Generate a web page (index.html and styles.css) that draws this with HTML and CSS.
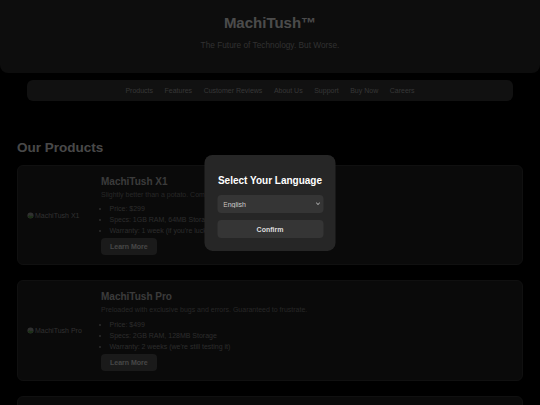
FILE: index.html
```html
<!DOCTYPE html>
<html lang="en">
<head>
  <meta charset="UTF-8">
  <title>MachiTush™</title>
  <link rel="stylesheet" href="styles.css">
</head>
<body>

  <header>
    <h1>MachiTush™</h1>
    <p>The Future of Technology. But Worse.</p>
  </header>

  <nav>
    <a href="#products">Products</a>
    <a href="#features">Features</a>
    <a href="#reviews">Customer Reviews</a>
    <a href="#about">About Us</a>
    <a href="#support">Support</a>
    <a href="#buy">Buy Now</a>
    <a href="#careers">Careers</a>
  </nav>

  <!-- PRODUCTS -->
  <section id="products">
    <h2>Our Products</h2>

    <div class="product">
      <div class="product-img">
        <svg class="broken" viewBox="0 0 16 16"><circle cx="8" cy="8" r="7" fill="#8a8a8a"/><path d="M2 11 L6 7 L9 10 L11 8 L14 11 A7 7 0 0 1 2 11 Z" fill="#4c8a3c"/></svg>MachiTush X1
      </div>
      <div class="product-info">
        <h3>MachiTush X1</h3>
        <p>Slightly better than a potato. Comes with a charger that might work.</p>
        <ul>
          <li>Price: $299</li>
          <li>Specs: 1GB RAM, 64MB Storage</li>
          <li>Warranty: 1 week (if you're lucky)</li>
        </ul>
        <button class="learn-btn">Learn More</button>
      </div>
    </div>

    <div class="product">
      <div class="product-img">
        <svg class="broken" viewBox="0 0 16 16"><circle cx="8" cy="8" r="7" fill="#8a8a8a"/><path d="M2 11 L6 7 L9 10 L11 8 L14 11 A7 7 0 0 1 2 11 Z" fill="#4c8a3c"/></svg>MachiTush Pro
      </div>
      <div class="product-info">
        <h3>MachiTush Pro</h3>
        <p>Preloaded with exclusive bugs and errors. Guaranteed to frustrate.</p>
        <ul>
          <li>Price: $499</li>
          <li>Specs: 2GB RAM, 128MB Storage</li>
          <li>Warranty: 2 weeks (we're still testing it)</li>
        </ul>
        <button class="learn-btn">Learn More</button>
      </div>
    </div>

    <div class="product">
      <div class="product-img">
        <svg class="broken" viewBox="0 0 16 16"><circle cx="8" cy="8" r="7" fill="#8a8a8a"/><path d="M2 11 L6 7 L9 10 L11 8 L14 11 A7 7 0 0 1 2 11 Z" fill="#4c8a3c"/></svg>MachiTush Ultra
      </div>
      <div class="product-info">
        <h3>MachiTush Ultra</h3>
        <p>Our most expensive mistake yet. Now with twice the lag.</p>
        <ul>
          <li>Price: $999</li>
          <li>Specs: 4GB RAM, 256MB Storage</li>
          <li>Warranty: None (good luck)</li>
        </ul>
        <button class="learn-btn">Learn More</button>
      </div>
    </div>
  </section>

  <!-- LANGUAGE POPUP -->
  <div class="overlay"></div>
  <div class="lang-modal">
    <h2>Select Your Language</h2>
    <div class="select-wrap">
      <select id="langSelect">
        <option>English</option>
        <option>Español</option>
        <option>Français</option>
        <option>Deutsch</option>
      </select>
      <svg class="chevron" viewBox="0 0 10 6"><path d="M1.5 1.2 L5 4.6 L8.5 1.2" fill="none" stroke="#ddd" stroke-width="1.8"/></svg>
    </div>
    <button class="confirm-btn" onclick="closeModal()">Confirm</button>
  </div>

  <script>
    function closeModal() {
      document.querySelector(".overlay").style.display = "none";
      document.querySelector(".lang-modal").style.display = "none";
    }
  </script>

</body>
</html>
```

FILE: styles.css
```css
body {
  font-family: "Liberation Sans", Arial, sans-serif;
  margin: 0;
  background-color: #000;
}

header {
  background-color: #252525;
  text-align: center;
  padding: 14px 10px 23px;
  border-radius: 0 0 8px 8px;
}

header h1 {
  margin: 0 0 8px;
  font-size: 15px;
  line-height: 18px;
  color: #d8d8d8;
}

header p {
  margin: 0;
  font-size: 8.3px;
  line-height: 10px;
  color: #8a8a8a;
}

nav {
  width: 90%;
  margin: 7px auto 0;
  padding: 6.5px 0;
  background-color: #313131;
  border-radius: 6px;
  display: flex;
  justify-content: center;
  gap: 11.5px;
}

nav a {
  color: #9a9a9a;
  text-decoration: none;
  font-size: 7px;
  line-height: 8px;
}

section {
  padding: 38.5px 17px 0;
}

section h2 {
  margin: 0 0 10px;
  font-size: 13.5px;
  color: #cfcfcf;
}

.product {
  display: flex;
  align-items: center;
  gap: 14px;
  padding: 10px 9px 9px;
  margin-bottom: 15px;
  background-color: #1d1d1d;
  border: 1px solid #2e2e2e;
  border-radius: 6px;
}

.product-img {
  width: 60px;
  flex-shrink: 0;
  display: flex;
  align-items: center;
  font-size: 7px;
  color: #8a8a8a;
  white-space: nowrap;
}

.broken {
  width: 7px;
  height: 7px;
  margin-right: 1px;
}

.product-info {
  font-size: 7px;
  line-height: 8px;
}

.product-info h3 {
  margin: 0 0 3.5px;
  font-size: 10px;
  line-height: 11.5px;
  color: #a8a8a8;
}

.product-info p {
  margin: 0 0 6.5px;
  color: #6e6e6e;
}

.product-info ul {
  margin: 0 0 3px;
  padding-left: 8.5px;
  color: #7e7e7e;
}

.product-info li + li {
  margin-top: 3px;
}

.learn-btn {
  display: block;
  font-family: inherit;
  height: 17px;
  padding: 0 9px;
  background-color: #4a4a4a;
  color: #c8c8c8;
  border: none;
  border-radius: 4px;
  font-size: 7px;
  font-weight: bold;
  cursor: pointer;
}

.overlay {
  position: fixed;
  inset: 0;
  background: rgba(0, 0, 0, 0.65);
}

.lang-modal {
  position: fixed;
  top: 50%;
  left: 50%;
  transform: translate(-50%, -50%);
  width: 106px;
  padding: 12.5px;
  background-color: #262626;
  border-radius: 8px;
  text-align: center;
}

.lang-modal h2 {
  margin: 8.3px 0;
  font-size: 10px;
  line-height: 11.5px;
  color: #fff;
}

.select-wrap {
  position: relative;
}

.chevron {
  position: absolute;
  right: 3px;
  top: 7px;
  width: 5px;
  height: 3.5px;
  pointer-events: none;
}

.lang-modal select,
.confirm-btn {
  display: block;
  width: 100%;
  height: 18px;
  border: none;
  border-radius: 4px;
  background-color: #353535;
  font-family: inherit;
  font-size: 7px;
}

.lang-modal select {
  appearance: none;
  padding: 0 6px;
  color: #ccc;
}

.confirm-btn {
  margin-top: 7px;
  color: #ddd;
  font-weight: bold;
  cursor: pointer;
}
```
